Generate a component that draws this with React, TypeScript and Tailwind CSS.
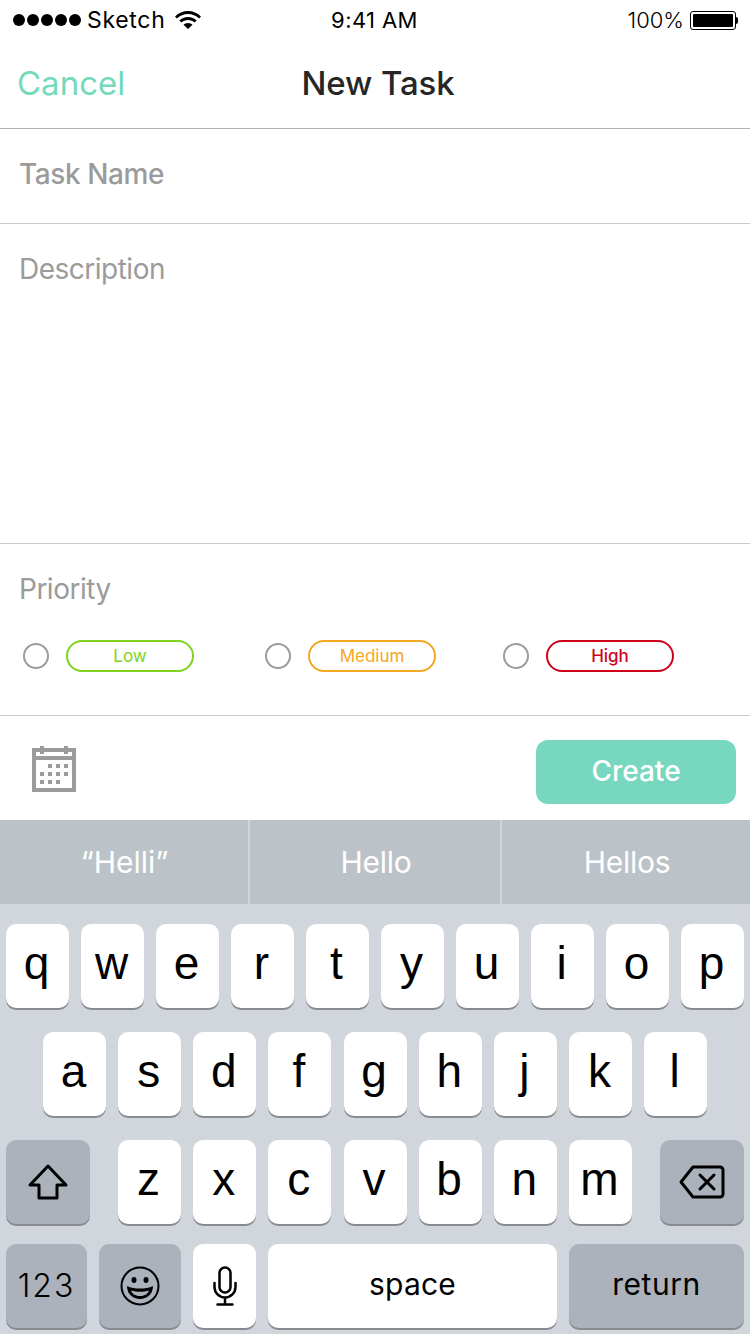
const sf = "font-['Inter','Liberation_Sans',sans-serif]";

const Key = ({ label }: { label: string }) => (
  <div className="w-[63px] h-[84px] flex items-center justify-center rounded-[10px] bg-white shadow-[0_2px_0_#888b90] text-[46px] leading-none pb-1.5 pr-0.5 text-black font-['Liberation_Sans',sans-serif]">
    {label}
  </div>
);

const Row = ({ keys, gap }: { keys: string[]; gap: string }) => (
  <div className={`flex ${gap}`}>
    {keys.map((k) => (
      <Key key={k} label={k} />
    ))}
  </div>
);

const Divider = () => <div className="h-px bg-[#c8c8c8]" />;

const Priority = ({ label, radio, gap, text, border }: { label: string; radio: string; gap: string; text: string; border: string }) => (
  <div className={`flex items-center ${radio} ${gap}`}>
    <div className="w-[26px] h-[26px] rounded-full border-2 border-[#9b9b9b]" />
    <div className={`w-[128px] h-8 pt-px rounded-2xl border-2 flex items-center justify-center text-[17px] ${text} ${border}`}>
      {label}
    </div>
  </div>
);

const CalendarIcon = () => (
  <svg width="44" height="46" viewBox="0 0 44 46" fill="#9b9b9b">
    <path fillRule="evenodd" d="M0 2h44v44H0zM4 6v4h36V6zM4 14v28h36V14z" />
    <path d="M8 0h4v8H8zM32 0h4v8h-4z" />
    {[[16, 18], [24, 18], [32, 18], [8, 26], [16, 26], [24, 26], [32, 26], [8, 34], [16, 34], [24, 34]].map(([x, y]) => (
      <rect key={`${x}-${y}`} x={x} y={y} width="4" height="4" />
    ))}
  </svg>
);

const App = () => {
  return (
    <div className={`w-[750px] h-[1334px] bg-white overflow-hidden flex flex-col ${sf}`}>
      {/* STATUS BAR */}
      <div className="h-10 pl-[13px] pr-3 flex items-center justify-between text-[23px] text-black">
        <div className="w-[215px] flex items-center">
          <div className="flex gap-[2px]">
            {[0, 1, 2, 3, 4].map((i) => (
              <div key={i} className="w-3 h-3 rounded-full bg-black" />
            ))}
          </div>
          <span className="ml-1.5 tracking-[0.7px]">Sketch</span>
          <svg className="ml-[9px]" width="26" height="18" viewBox="0 0 26 18" fill="black">
            <path d="M13 0C8 0 3.600 2 0 5.400L2 7.500C5 4.700 8.800 3 13 3s8 1.700 11 4.500l2-2.100C22.400 2 18 0 13 0z" />
            <path d="M13 6c-3.400 0-6.400 1.300-8.700 3.500l2.100 2.100C8.100 10 10.400 9 13 9s4.900 1 6.600 2.600l2.100-2.100C19.400 7.300 16.400 6 13 6z" />
            <path d="M13 12c-1.800 0-3.300.7-4.500 1.800L13 18l4.500-4.200C16.300 12.700 14.800 12 13 12z" />
          </svg>
        </div>
        <span className="text-[22px] tracking-[0.4px] mr-[2px]">9:41 AM</span>
        <div className="w-[215px] flex items-center justify-end">
          <span className="text-[22px] font-light mr-[6px]">100%</span>
          <div className="w-[46px] h-[19px] border border-black rounded-[3px] p-[2px]">
            <div className="w-full h-full bg-black rounded-[1px]" />
          </div>
          <div className="w-[2px] h-[7px] bg-black rounded-r-sm" />
        </div>
      </div>

      {/* NAV */}
      <div className="h-[88px] relative flex items-center justify-center pl-[6px]">
        <span className="absolute left-[17px] text-[33px] text-[#75d9bc]">Cancel</span>
        <span className="text-[33px] tracking-[-0.1px] font-medium text-[#262626]">New Task</span>
      </div>
      <div className="h-px bg-[#b2b2b2]" />

      {/* FORM */}
      <div className="h-[94px] pl-[19px] pt-6 text-[28px] leading-[44px] font-medium text-[#9b9b9b] tracking-[-0.4px]">
        <span className="block -mt-[1px]">Task Name</span>
      </div>
      <Divider />
      <div className="h-[319px] pl-[19px] pt-6 text-[28px] leading-[42px] text-[#9b9b9b] tracking-[-0.5px]">Description</div>
      <Divider />
      <div className="h-[171px] flex flex-col">
        <div className="pl-[19px] pt-6 text-[28px] leading-[42px] text-[#9b9b9b] tracking-[-0.5px]">Priority</div>
        <div className="flex mt-[30px] pl-[23px]">
          <Priority label="Low" radio="w-[242px]" gap="gap-[17px]" text="text-[#7ed321]" border="border-[#7ed321]" />
          <Priority label="Medium" radio="w-[238px]" gap="gap-[17px]" text="text-[#f5a623]" border="border-[#f5a623]" />
          <Priority label="High" radio="w-[200px]" gap="gap-[17px]" text="text-[#d0021b] font-medium" border="border-[#d0021b]" />
        </div>
      </div>
      <Divider />

      {/* ACTIONS */}
      <div className="h-[104px] pl-8 pr-3.5 flex items-start justify-between">
        <div className="mt-[30px]">
          <CalendarIcon />
        </div>
        <button className="mt-6 w-[200px] h-16 pb-[3px] rounded-xl bg-[#78d8bf] text-white text-[28px] font-medium">Create</button>
      </div>

      {/* SUGGESTIONS */}
      <div className="h-[84px] flex bg-[#bbc2c8] text-white text-[30px] tracking-[-0.3px]">
        <div className="w-[248px] pt-px pl-px flex items-center justify-center tracking-normal">“Helli”</div>
        <div className="w-[2px] bg-[#d1d5dc]" />
        <div className="w-[250px] pt-px pl-0.5 flex items-center justify-center">Hello</div>
        <div className="w-[2px] bg-[#d1d5dc]" />
        <div className="flex-1 pt-px pl-0.5 flex items-center justify-center">Hellos</div>
      </div>

      {/* KEYBOARD */}
      <div className="flex-1 bg-[#d1d5dc] pt-5 px-1.5 flex flex-col gap-6 font-['Liberation_Sans',sans-serif]">
        <Row gap="gap-3" keys={["q", "w", "e", "r", "t", "y", "u", "i", "o", "p"]} />
        <div className="pl-[37px]">
          <Row gap="gap-[12.15px]" keys={["a", "s", "d", "f", "g", "h", "j", "k", "l"]} />
        </div>
        <div className="flex justify-between">
          <div className="w-[84px] h-[84px] flex items-center justify-center rounded-[10px] bg-[#abb2bc] shadow-[0_2px_0_#888b90]">
            <svg width="40" height="36" viewBox="0 0 40 36" fill="none" stroke="black" strokeWidth="3" strokeLinejoin="round">
              <path d="M20 2L2 21h9v13h18V21h9z" />
            </svg>
          </div>
          <Row gap="gap-[12.15px]" keys={["z", "x", "c", "v", "b", "n", "m"]} />
          <div className="w-[84px] h-[84px] flex items-center justify-center rounded-[10px] bg-[#abb2bc] shadow-[0_2px_0_#888b90]">
            <svg width="46" height="34" viewBox="0 0 46 34" fill="none" stroke="black" strokeWidth="3" strokeLinejoin="round" strokeLinecap="round">
              <path d="M14 2h27a3 3 0 0 1 3 3v24a3 3 0 0 1-3 3H14L2 17z" />
              <path d="M21 10l14 14M35 10L21 24" />
            </svg>
          </div>
        </div>
        <div className="flex gap-3 -mt-1">
          <div className="w-[81px] h-[84px] flex items-center justify-center rounded-[10px] bg-[#abb2bc] shadow-[0_2px_0_#888b90] text-[32px] tracking-[2px] text-black font-['Inter',sans-serif] font-light">
            123
          </div>
          <div className="w-[82px] h-[84px] flex items-center justify-center rounded-[10px] bg-[#abb2bc] shadow-[0_2px_0_#888b90]">
            <svg width="40" height="40" viewBox="0 0 40 40" fill="none" stroke="black" strokeWidth="2">
              <circle cx="20" cy="20" r="18.500" />
              <ellipse cx="14" cy="14" rx="2.500" ry="3" fill="black" stroke="none" />
              <ellipse cx="26" cy="14" rx="2.500" ry="3" fill="black" stroke="none" />
              <path d="M7 20c4 2 8 2.500 13 2.500s9-.5 13-2.500c0 8-6 13-13 13S7 28 7 20z" fill="black" stroke="none" />
              <path d="M11 24.500c3 1 6 1.300 9 1.300s6-.3 9-1.300c-1 3-4 5.500-9 5.500s-8-2.500-9-5.500z" fill="#abb2bc" stroke="none" />
            </svg>
          </div>
          <div className="w-[63px] h-[84px] flex items-center justify-center rounded-[10px] bg-white shadow-[0_2px_0_#888b90]">
            <svg width="24" height="40" viewBox="0 0 24 40" fill="none" stroke="black" strokeWidth="2.500" strokeLinecap="round">
              <rect x="6.500" y="1.500" width="11" height="25" rx="5.500" />
              <path d="M1.500 17v4a10.500 10.500 0 0 0 21 0v-4M12 32v6M4.500 38.500h15" />
            </svg>
          </div>
          <div className="w-[289px] h-[84px] flex items-center justify-center rounded-[10px] bg-white shadow-[0_2px_0_#888b90] text-[30px] tracking-[0.2px] pb-1 text-black font-['Inter',sans-serif]">
            space
          </div>
          <div className="w-[175px] h-[84px] flex items-center justify-center rounded-[10px] bg-[#abb2bc] shadow-[0_2px_0_#888b90] text-[30px] tracking-[0.5px] pb-1 text-black font-['Inter',sans-serif]">
            return
          </div>
        </div>
      </div>
    </div>
  );
};

export default App;
